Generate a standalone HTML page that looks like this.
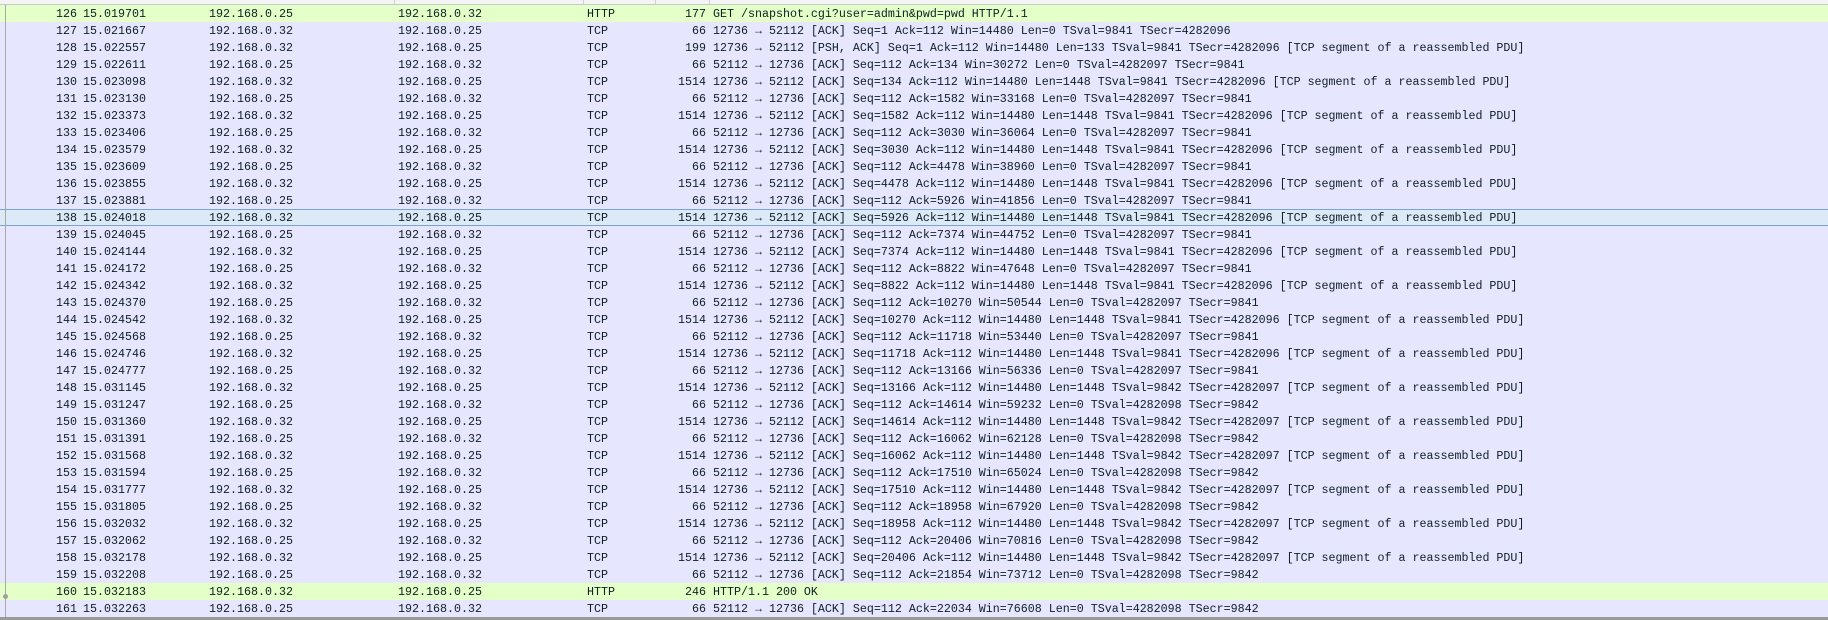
<!DOCTYPE html>
<html><head><meta charset="utf-8"><style>
html,body{margin:0;padding:0;width:1828px;height:620px;overflow:hidden;background:#fff;}
body{position:relative;font-family:"Liberation Mono","DejaVu Sans Mono",monospace;font-size:11.67px;color:#0e1f26;}
.hdr{position:absolute;left:0;top:0;width:1828px;height:4px;background:#f5f5f5;border-bottom:1px solid #c8c8c8;}
.hdr i{position:absolute;top:0;width:1px;height:4px;background:#d0d0d0;}
.r{position:absolute;left:0;width:1828px;height:17px;line-height:17px;background:#e7e6ff;white-space:pre;}
.r.h{background:#e4ffc7;}
.r.s{background:#dce9f7;box-shadow:inset 0 1px 0 #7da2ce,inset 0 -1px 0 #7da2ce;}
.r span{position:absolute;top:1px;}
.n{right:1751px;text-align:right;}
.t{left:83px}.a{left:209px}.b{left:398px}.p{left:587px}
.l{right:1122px;text-align:right;}
.i{left:713px}
.vl{position:absolute;left:5px;top:5px;width:1px;height:612px;background:#a8a8a8;}
.dot{position:absolute;left:3px;top:594px;width:5px;height:5px;border-radius:50%;background:#a0a0a0;}
.bot{position:absolute;left:0;top:617px;width:1828px;height:3px;background:#9a9a9a;}
</style></head><body>
<div class="hdr"><i style="left:394px"></i><i style="left:583px"></i><i style="left:655px"></i><i style="left:709px"></i></div>
<div class="r h" style="top:5px"><span class="n">126</span><span class="t">15.019701</span><span class="a">192.168.0.25</span><span class="b">192.168.0.32</span><span class="p">HTTP</span><span class="l">177</span><span class="i">GET /snapshot.cgi?user=admin&amp;pwd=pwd HTTP/1.1</span></div>
<div class="r" style="top:22px"><span class="n">127</span><span class="t">15.021667</span><span class="a">192.168.0.32</span><span class="b">192.168.0.25</span><span class="p">TCP</span><span class="l">66</span><span class="i">12736 → 52112 [ACK] Seq=1 Ack=112 Win=14480 Len=0 TSval=9841 TSecr=4282096</span></div>
<div class="r" style="top:39px"><span class="n">128</span><span class="t">15.022557</span><span class="a">192.168.0.32</span><span class="b">192.168.0.25</span><span class="p">TCP</span><span class="l">199</span><span class="i">12736 → 52112 [PSH, ACK] Seq=1 Ack=112 Win=14480 Len=133 TSval=9841 TSecr=4282096 [TCP segment of a reassembled PDU]</span></div>
<div class="r" style="top:56px"><span class="n">129</span><span class="t">15.022611</span><span class="a">192.168.0.25</span><span class="b">192.168.0.32</span><span class="p">TCP</span><span class="l">66</span><span class="i">52112 → 12736 [ACK] Seq=112 Ack=134 Win=30272 Len=0 TSval=4282097 TSecr=9841</span></div>
<div class="r" style="top:73px"><span class="n">130</span><span class="t">15.023098</span><span class="a">192.168.0.32</span><span class="b">192.168.0.25</span><span class="p">TCP</span><span class="l">1514</span><span class="i">12736 → 52112 [ACK] Seq=134 Ack=112 Win=14480 Len=1448 TSval=9841 TSecr=4282096 [TCP segment of a reassembled PDU]</span></div>
<div class="r" style="top:90px"><span class="n">131</span><span class="t">15.023130</span><span class="a">192.168.0.25</span><span class="b">192.168.0.32</span><span class="p">TCP</span><span class="l">66</span><span class="i">52112 → 12736 [ACK] Seq=112 Ack=1582 Win=33168 Len=0 TSval=4282097 TSecr=9841</span></div>
<div class="r" style="top:107px"><span class="n">132</span><span class="t">15.023373</span><span class="a">192.168.0.32</span><span class="b">192.168.0.25</span><span class="p">TCP</span><span class="l">1514</span><span class="i">12736 → 52112 [ACK] Seq=1582 Ack=112 Win=14480 Len=1448 TSval=9841 TSecr=4282096 [TCP segment of a reassembled PDU]</span></div>
<div class="r" style="top:124px"><span class="n">133</span><span class="t">15.023406</span><span class="a">192.168.0.25</span><span class="b">192.168.0.32</span><span class="p">TCP</span><span class="l">66</span><span class="i">52112 → 12736 [ACK] Seq=112 Ack=3030 Win=36064 Len=0 TSval=4282097 TSecr=9841</span></div>
<div class="r" style="top:141px"><span class="n">134</span><span class="t">15.023579</span><span class="a">192.168.0.32</span><span class="b">192.168.0.25</span><span class="p">TCP</span><span class="l">1514</span><span class="i">12736 → 52112 [ACK] Seq=3030 Ack=112 Win=14480 Len=1448 TSval=9841 TSecr=4282096 [TCP segment of a reassembled PDU]</span></div>
<div class="r" style="top:158px"><span class="n">135</span><span class="t">15.023609</span><span class="a">192.168.0.25</span><span class="b">192.168.0.32</span><span class="p">TCP</span><span class="l">66</span><span class="i">52112 → 12736 [ACK] Seq=112 Ack=4478 Win=38960 Len=0 TSval=4282097 TSecr=9841</span></div>
<div class="r" style="top:175px"><span class="n">136</span><span class="t">15.023855</span><span class="a">192.168.0.32</span><span class="b">192.168.0.25</span><span class="p">TCP</span><span class="l">1514</span><span class="i">12736 → 52112 [ACK] Seq=4478 Ack=112 Win=14480 Len=1448 TSval=9841 TSecr=4282096 [TCP segment of a reassembled PDU]</span></div>
<div class="r" style="top:192px"><span class="n">137</span><span class="t">15.023881</span><span class="a">192.168.0.25</span><span class="b">192.168.0.32</span><span class="p">TCP</span><span class="l">66</span><span class="i">52112 → 12736 [ACK] Seq=112 Ack=5926 Win=41856 Len=0 TSval=4282097 TSecr=9841</span></div>
<div class="r s" style="top:209px"><span class="n">138</span><span class="t">15.024018</span><span class="a">192.168.0.32</span><span class="b">192.168.0.25</span><span class="p">TCP</span><span class="l">1514</span><span class="i">12736 → 52112 [ACK] Seq=5926 Ack=112 Win=14480 Len=1448 TSval=9841 TSecr=4282096 [TCP segment of a reassembled PDU]</span></div>
<div class="r" style="top:226px"><span class="n">139</span><span class="t">15.024045</span><span class="a">192.168.0.25</span><span class="b">192.168.0.32</span><span class="p">TCP</span><span class="l">66</span><span class="i">52112 → 12736 [ACK] Seq=112 Ack=7374 Win=44752 Len=0 TSval=4282097 TSecr=9841</span></div>
<div class="r" style="top:243px"><span class="n">140</span><span class="t">15.024144</span><span class="a">192.168.0.32</span><span class="b">192.168.0.25</span><span class="p">TCP</span><span class="l">1514</span><span class="i">12736 → 52112 [ACK] Seq=7374 Ack=112 Win=14480 Len=1448 TSval=9841 TSecr=4282096 [TCP segment of a reassembled PDU]</span></div>
<div class="r" style="top:260px"><span class="n">141</span><span class="t">15.024172</span><span class="a">192.168.0.25</span><span class="b">192.168.0.32</span><span class="p">TCP</span><span class="l">66</span><span class="i">52112 → 12736 [ACK] Seq=112 Ack=8822 Win=47648 Len=0 TSval=4282097 TSecr=9841</span></div>
<div class="r" style="top:277px"><span class="n">142</span><span class="t">15.024342</span><span class="a">192.168.0.32</span><span class="b">192.168.0.25</span><span class="p">TCP</span><span class="l">1514</span><span class="i">12736 → 52112 [ACK] Seq=8822 Ack=112 Win=14480 Len=1448 TSval=9841 TSecr=4282096 [TCP segment of a reassembled PDU]</span></div>
<div class="r" style="top:294px"><span class="n">143</span><span class="t">15.024370</span><span class="a">192.168.0.25</span><span class="b">192.168.0.32</span><span class="p">TCP</span><span class="l">66</span><span class="i">52112 → 12736 [ACK] Seq=112 Ack=10270 Win=50544 Len=0 TSval=4282097 TSecr=9841</span></div>
<div class="r" style="top:311px"><span class="n">144</span><span class="t">15.024542</span><span class="a">192.168.0.32</span><span class="b">192.168.0.25</span><span class="p">TCP</span><span class="l">1514</span><span class="i">12736 → 52112 [ACK] Seq=10270 Ack=112 Win=14480 Len=1448 TSval=9841 TSecr=4282096 [TCP segment of a reassembled PDU]</span></div>
<div class="r" style="top:328px"><span class="n">145</span><span class="t">15.024568</span><span class="a">192.168.0.25</span><span class="b">192.168.0.32</span><span class="p">TCP</span><span class="l">66</span><span class="i">52112 → 12736 [ACK] Seq=112 Ack=11718 Win=53440 Len=0 TSval=4282097 TSecr=9841</span></div>
<div class="r" style="top:345px"><span class="n">146</span><span class="t">15.024746</span><span class="a">192.168.0.32</span><span class="b">192.168.0.25</span><span class="p">TCP</span><span class="l">1514</span><span class="i">12736 → 52112 [ACK] Seq=11718 Ack=112 Win=14480 Len=1448 TSval=9841 TSecr=4282096 [TCP segment of a reassembled PDU]</span></div>
<div class="r" style="top:362px"><span class="n">147</span><span class="t">15.024777</span><span class="a">192.168.0.25</span><span class="b">192.168.0.32</span><span class="p">TCP</span><span class="l">66</span><span class="i">52112 → 12736 [ACK] Seq=112 Ack=13166 Win=56336 Len=0 TSval=4282097 TSecr=9841</span></div>
<div class="r" style="top:379px"><span class="n">148</span><span class="t">15.031145</span><span class="a">192.168.0.32</span><span class="b">192.168.0.25</span><span class="p">TCP</span><span class="l">1514</span><span class="i">12736 → 52112 [ACK] Seq=13166 Ack=112 Win=14480 Len=1448 TSval=9842 TSecr=4282097 [TCP segment of a reassembled PDU]</span></div>
<div class="r" style="top:396px"><span class="n">149</span><span class="t">15.031247</span><span class="a">192.168.0.25</span><span class="b">192.168.0.32</span><span class="p">TCP</span><span class="l">66</span><span class="i">52112 → 12736 [ACK] Seq=112 Ack=14614 Win=59232 Len=0 TSval=4282098 TSecr=9842</span></div>
<div class="r" style="top:413px"><span class="n">150</span><span class="t">15.031360</span><span class="a">192.168.0.32</span><span class="b">192.168.0.25</span><span class="p">TCP</span><span class="l">1514</span><span class="i">12736 → 52112 [ACK] Seq=14614 Ack=112 Win=14480 Len=1448 TSval=9842 TSecr=4282097 [TCP segment of a reassembled PDU]</span></div>
<div class="r" style="top:430px"><span class="n">151</span><span class="t">15.031391</span><span class="a">192.168.0.25</span><span class="b">192.168.0.32</span><span class="p">TCP</span><span class="l">66</span><span class="i">52112 → 12736 [ACK] Seq=112 Ack=16062 Win=62128 Len=0 TSval=4282098 TSecr=9842</span></div>
<div class="r" style="top:447px"><span class="n">152</span><span class="t">15.031568</span><span class="a">192.168.0.32</span><span class="b">192.168.0.25</span><span class="p">TCP</span><span class="l">1514</span><span class="i">12736 → 52112 [ACK] Seq=16062 Ack=112 Win=14480 Len=1448 TSval=9842 TSecr=4282097 [TCP segment of a reassembled PDU]</span></div>
<div class="r" style="top:464px"><span class="n">153</span><span class="t">15.031594</span><span class="a">192.168.0.25</span><span class="b">192.168.0.32</span><span class="p">TCP</span><span class="l">66</span><span class="i">52112 → 12736 [ACK] Seq=112 Ack=17510 Win=65024 Len=0 TSval=4282098 TSecr=9842</span></div>
<div class="r" style="top:481px"><span class="n">154</span><span class="t">15.031777</span><span class="a">192.168.0.32</span><span class="b">192.168.0.25</span><span class="p">TCP</span><span class="l">1514</span><span class="i">12736 → 52112 [ACK] Seq=17510 Ack=112 Win=14480 Len=1448 TSval=9842 TSecr=4282097 [TCP segment of a reassembled PDU]</span></div>
<div class="r" style="top:498px"><span class="n">155</span><span class="t">15.031805</span><span class="a">192.168.0.25</span><span class="b">192.168.0.32</span><span class="p">TCP</span><span class="l">66</span><span class="i">52112 → 12736 [ACK] Seq=112 Ack=18958 Win=67920 Len=0 TSval=4282098 TSecr=9842</span></div>
<div class="r" style="top:515px"><span class="n">156</span><span class="t">15.032032</span><span class="a">192.168.0.32</span><span class="b">192.168.0.25</span><span class="p">TCP</span><span class="l">1514</span><span class="i">12736 → 52112 [ACK] Seq=18958 Ack=112 Win=14480 Len=1448 TSval=9842 TSecr=4282097 [TCP segment of a reassembled PDU]</span></div>
<div class="r" style="top:532px"><span class="n">157</span><span class="t">15.032062</span><span class="a">192.168.0.25</span><span class="b">192.168.0.32</span><span class="p">TCP</span><span class="l">66</span><span class="i">52112 → 12736 [ACK] Seq=112 Ack=20406 Win=70816 Len=0 TSval=4282098 TSecr=9842</span></div>
<div class="r" style="top:549px"><span class="n">158</span><span class="t">15.032178</span><span class="a">192.168.0.32</span><span class="b">192.168.0.25</span><span class="p">TCP</span><span class="l">1514</span><span class="i">12736 → 52112 [ACK] Seq=20406 Ack=112 Win=14480 Len=1448 TSval=9842 TSecr=4282097 [TCP segment of a reassembled PDU]</span></div>
<div class="r" style="top:566px"><span class="n">159</span><span class="t">15.032208</span><span class="a">192.168.0.25</span><span class="b">192.168.0.32</span><span class="p">TCP</span><span class="l">66</span><span class="i">52112 → 12736 [ACK] Seq=112 Ack=21854 Win=73712 Len=0 TSval=4282098 TSecr=9842</span></div>
<div class="r h" style="top:583px"><span class="n">160</span><span class="t">15.032183</span><span class="a">192.168.0.32</span><span class="b">192.168.0.25</span><span class="p">HTTP</span><span class="l">246</span><span class="i">HTTP/1.1 200 OK</span></div>
<div class="r" style="top:600px"><span class="n">161</span><span class="t">15.032263</span><span class="a">192.168.0.25</span><span class="b">192.168.0.32</span><span class="p">TCP</span><span class="l">66</span><span class="i">52112 → 12736 [ACK] Seq=112 Ack=22034 Win=76608 Len=0 TSval=4282098 TSecr=9842</span></div>
<div class="vl"></div>
<div class="dot"></div>
<div class="bot"></div>
</body></html>
